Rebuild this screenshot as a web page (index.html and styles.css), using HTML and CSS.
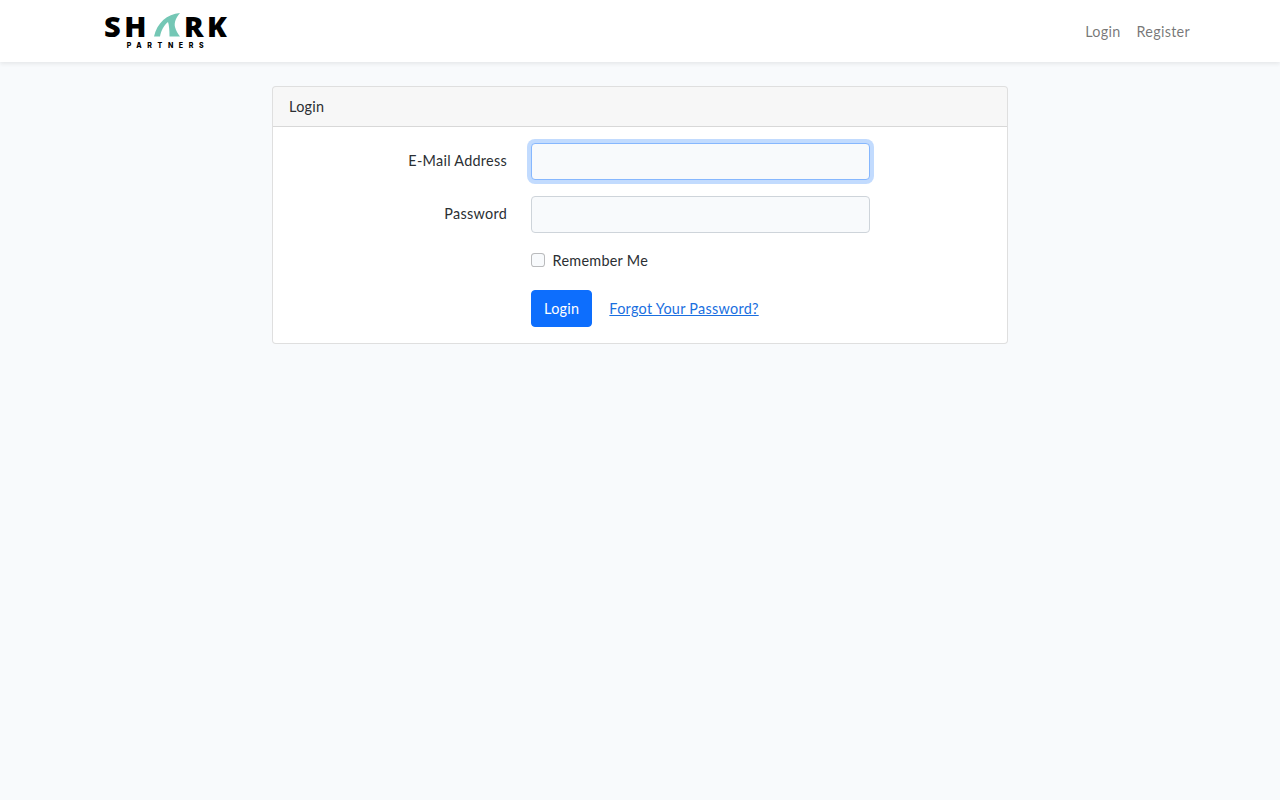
FILE: index.html
```html
<!DOCTYPE html>
<html lang="en">
<head>
    <meta charset="UTF-8">
    <meta name="viewport" content="width=device-width, initial-scale=1.0">
    <title>Shark Partners - Login</title>
    <link rel="stylesheet" href="styles.css">
</head>
<body>
    <nav class="navbar">
        <div class="container navbar-inner">
            <a class="brand" href="#">
                <span class="brand-word">
                    <span>SH</span>
                    <svg class="brand-fin" viewBox="0 0 26 24" aria-hidden="true">
                        <path d="M0 23.5C3 10 13 1 26 0C22 5 20 9 21 14C22 18 24 21 26 23.5H15.500C15.500 17 15 12 14 9C10 12 7 18 6 23.5Z"/>
                    </svg>
                    <span>RK</span>
                </span>
                <span class="brand-sub">PARTNERS</span>
            </a>
            <div class="nav-links">
                <a href="#">Login</a>
                <a href="#">Register</a>
            </div>
        </div>
    </nav>

    <main class="container content">
        <div class="card">
            <div class="card-header">Login</div>
            <form class="card-body" onsubmit="return false">
                <div class="form-row">
                    <label class="form-label" for="email">E-Mail Address</label>
                    <div class="form-field">
                        <input class="form-input is-focused" type="email" id="email">
                    </div>
                </div>
                <div class="form-row">
                    <label class="form-label" for="password">Password</label>
                    <div class="form-field">
                        <input class="form-input" type="password" id="password">
                    </div>
                </div>
                <div class="form-row">
                    <div class="form-field form-offset">
                        <label class="form-check">
                            <input class="check-input" type="checkbox">
                            <span>Remember Me</span>
                        </label>
                    </div>
                </div>
                <div class="form-row form-row-last">
                    <div class="form-field form-offset actions">
                        <button class="btn-primary" type="submit">Login</button>
                        <a class="forgot-link" href="#">Forgot Your Password?</a>
                    </div>
                </div>
            </form>
        </div>
    </main>
</body>
</html>
```

FILE: styles.css
```css
* {
    box-sizing: border-box;
}
body, html {
    margin: 0;
    padding: 0;
    height: 100%;
}
body {
    font-family: Lato, "Open Sans", sans-serif;
    font-size: 14.4px;
    line-height: 1.6;
    letter-spacing: 0.28px;
    color: #2b2f33;
    background-color: #f8fafc;
}
a {
    text-decoration: none;
}
.container {
    width: 1140px;
    margin: 0 auto;
    padding: 0 12px;
}
.navbar {
    height: 62px;
    background-color: #fff;
    box-shadow: 0 2px 4px rgba(0,0,0,0.075);
}
.navbar-inner {
    height: 100%;
    display: flex;
    justify-content: space-between;
    align-items: center;
}
.brand {
    margin-left: 22px;
    width: 123px;
    display: flex;
    flex-direction: column;
    align-items: center;
    color: #000;
}
.brand-word {
    width: 100%;
    height: 24px;
    display: flex;
    justify-content: space-between;
    align-items: flex-end;
    font-family: "Open Sans", sans-serif;
    font-size: 29px;
    font-weight: 800;
    line-height: 22px;
    letter-spacing: 3.5px;
}
.brand-word span:last-child {
    margin-right: -3.5px;
}
.brand-fin {
    width: 26px;
    height: 24px;
    flex: none;
    fill: #74c7b5;
}
.brand-sub {
    margin-top: 4px;
    font-family: Inter, sans-serif;
    font-size: 7px;
    font-weight: 800;
    line-height: 9px;
    letter-spacing: 5.6px;
    margin-right: -5px;
}
.nav-links {
    display: flex;
    padding-top: 1px;
}
.nav-links a {
    padding: 8px;
    color: rgba(0,0,0,0.55);
}
.content {
    padding-top: 24px;
}
.card {
    width: 736px;
    margin: 0 auto;
    background-color: #fff;
    border: 1px solid rgba(0,0,0,0.125);
    border-radius: 4px;
}
.card-header {
    padding: 8px 16px;
    background-color: rgba(0,0,0,0.03);
    border-bottom: 1px solid rgba(0,0,0,0.125);
    border-radius: 3px 3px 0 0;
}
.card-body {
    padding: 16px 4px;
}
.form-row {
    display: flex;
    margin-bottom: 16px;
}
.form-row-last {
    margin-bottom: 0;
}
.form-label {
    width: 242px;
    padding: 6px 12px 0;
    text-align: right;
}
.form-field {
    width: 363px;
    padding: 0 12px;
}
.form-offset {
    margin-left: 242px;
}
.form-input {
    display: block;
    width: 100%;
    height: 37px;
    padding: 6px 12px;
    font: inherit;
    color: #212529;
    background-color: #f8fafc;
    border: 1px solid #ced4da;
    border-radius: 4px;
    outline: 0;
}
.form-input.is-focused, .form-input:focus {
    border-color: #86b7fe;
    box-shadow: 0 0 0 4px rgba(13,110,253,0.25);
}
.form-check {
    display: flex;
    align-items: flex-start;
    margin-bottom: 2px;
}
.check-input {
    appearance: none;
    width: 14.4px;
    height: 14.4px;
    margin: 4px 7.2px 0 0;
    background-color: #f8fafc;
    border: 1px solid rgba(0,0,0,0.25);
    border-radius: 3.6px;
}
.actions {
    display: flex;
    align-items: center;
}
.btn-primary {
    height: 37px;
    padding: 6px 12px;
    font: inherit;
    letter-spacing: inherit;
    color: #fff;
    background-color: #0d6efd;
    border: 1px solid #0d6efd;
    border-radius: 4px;
    cursor: pointer;
}
.btn-primary:hover {
    background-color: #0b5ed7;
}
.forgot-link {
    margin-left: 17px;
    color: #1a6fe0;
    text-decoration: underline;
}
```
